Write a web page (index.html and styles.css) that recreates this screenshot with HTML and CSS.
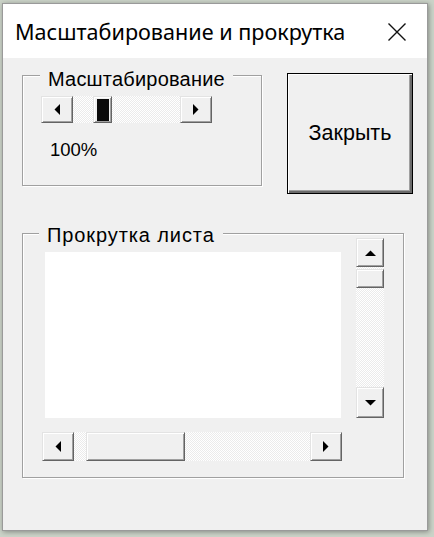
FILE: index.html
```html
<!DOCTYPE html>
<html lang="ru">
<head>
<meta charset="utf-8">
<title>Масштабирование и прокрутка</title>
<link rel="stylesheet" href="styles.css">
</head>
<body>
<div class="window">
  <div class="titlebar">
    <span class="title">Масштабирование и прокрутка</span>
    <svg class="close-x" width="20" height="20" viewBox="0 0 20 20"><path d="M1.5 1.5L18.5 18.5M18.5 1.5L1.5 18.5"/></svg>
  </div>
  <div class="client">
    <div class="top-row">
      <div class="frame frame-zoom">
        <span class="caption caption-zoom">Масштабирование</span>
        <div class="hscroll hscroll-zoom">
          <div class="sbtn sbtn-h"><svg width="6" height="11" viewBox="0 0 6 11"><polygon points="6,0 6,11 0.5,5.5"/></svg></div>
          <div class="track track-h">
            <div class="thumb thumb-focus" style="margin-left:20px"><span class="focus-fill"></span></div>
          </div>
          <div class="sbtn sbtn-h"><svg width="6" height="11" viewBox="0 0 6 11"><polygon points="0,0 0,11 5.5,5.5"/></svg></div>
        </div>
        <div class="percent">100%</div>
      </div>
      <button class="close-btn">Закрыть</button>
    </div>
    <div class="frame frame-scroll">
      <span class="caption caption-scroll">Прокрутка листа</span>
      <div class="scroll-row">
        <div class="listbox"></div>
        <div class="vscroll">
          <div class="sbtn sbtn-up"><svg width="11" height="6" viewBox="0 0 11 6"><polygon points="0,6 11,6 5.5,0.5"/></svg></div>
          <div class="track track-v">
            <div class="thumb thumb-v" style="margin-top:2px"></div>
          </div>
          <div class="sbtn sbtn-down"><svg width="11" height="6" viewBox="0 0 11 6"><polygon points="0,0 11,0 5.5,5.5"/></svg></div>
        </div>
      </div>
      <div class="hscroll hscroll-sheet">
        <div class="sbtn sbtn-h2"><svg width="6" height="11" viewBox="0 0 6 11"><polygon points="6,0 6,11 0.5,5.5"/></svg></div>
        <div class="track track-h">
          <div class="thumb thumb-wide" style="margin-left:12px"></div>
        </div>
        <div class="sbtn sbtn-h2"><svg width="6" height="11" viewBox="0 0 6 11"><polygon points="0,0 0,11 5.5,5.5"/></svg></div>
      </div>
    </div>
  </div>
</div>
</body>
</html>
```

FILE: styles.css
```css
* { box-sizing: border-box; }

html, body {
  margin: 0;
  padding: 0;
}

body {
  width: 434px;
  height: 537px;
  overflow: hidden;
  background: #cbd3c8;
  font-family: "Liberation Sans", Arial, sans-serif;
  color: #000;
}

.window {
  margin: 3px 0 0 2px;
  width: 426px;
  height: 528px;
  border: 1px solid #9a9a9a;
  background: #f0f0f0;
  display: flex;
  flex-direction: column;
  box-shadow: 1px 1px 5px rgba(0, 0, 0, 0.35);
}

.titlebar {
  height: 54px;
  flex: 0 0 54px;
  background: #fff;
  display: flex;
  align-items: center;
  padding: 0 20px 0 12px;
}

.title {
  flex: 1;
  font-family: "Noto Sans", "Open Sans", sans-serif;
  font-size: 21.6px;
  line-height: 28px;
  color: #000;
  margin-top: 1px;
}

.close-x {
  display: block;
  margin-top: 2px;
}

.close-x path {
  stroke: #111;
  stroke-width: 1.4;
  fill: none;
}

.client {
  flex: 1;
  padding: 15px 0 0 19px;
}

.top-row {
  display: flex;
  align-items: flex-start;
}

.frame {
  position: relative;
  border: 1px solid #a0a0a0;
  box-shadow: inset 1px 1px 0 #fff, 1px 1px 0 #fff;
}

.caption {
  position: absolute;
  background: #f0f0f0;
  padding: 0 8px;
  font-size: 20px;
  line-height: 24px;
  white-space: nowrap;
}

.caption-zoom {
  top: -9px;
  left: 17px;
  letter-spacing: 0.2px;
}

.caption-scroll {
  top: -11px;
  left: 16px;
  letter-spacing: 0.9px;
}

.frame-zoom {
  margin-top: 2px;
  width: 240px;
  height: 111px;
  padding: 20px 0 0 18px;
}

.hscroll {
  display: flex;
}

.hscroll-zoom {
  width: 171px;
  height: 27px;
}

.sbtn {
  flex: none;
  background: #f0f0f0;
  border-top: 1px solid #e3e3e3;
  border-left: 1px solid #e3e3e3;
  border-right: 1px solid #646464;
  border-bottom: 1px solid #646464;
  box-shadow: inset 1px 1px 0 #fff, inset -1px -1px 0 #a0a0a0;
  display: flex;
  align-items: center;
  justify-content: center;
}

.sbtn svg {
  display: block;
}

.sbtn svg polygon {
  fill: #000;
}

.sbtn-h {
  width: 32px;
  height: 100%;
}

.sbtn-h2 {
  width: 32px;
  height: 100%;
}

.track {
  flex: 1;
  display: flex;
  background: repeating-conic-gradient(#ffffff 0 25%, #ebebeb 0 50%) 0 0 / 2px 2px;
}

.track-v {
  flex-direction: column;
}

.thumb {
  flex: none;
  background: #f0f0f0;
  border-top: 1px solid #e3e3e3;
  border-left: 1px solid #e3e3e3;
  border-right: 1px solid #646464;
  border-bottom: 1px solid #646464;
  box-shadow: inset 1px 1px 0 #fff, inset -1px -1px 0 #a0a0a0;
}

.thumb-focus {
  width: 19px;
  height: 100%;
  padding: 2px 2px 1px 3px;
  display: flex;
}

.focus-fill {
  flex: 1;
  background: #0a0a0a;
}

.thumb-wide {
  width: 99px;
  height: 100%;
}

.thumb-v {
  width: 100%;
  height: 19px;
}

.percent {
  margin: 16px 0 0 9px;
  font-size: 18.5px;
  line-height: 22px;
}

.close-btn {
  margin: 0 0 0 25px;
  width: 126px;
  height: 121px;
  padding: 0;
  border: 1px solid #000;
  border-radius: 0;
  background: #f0f0f0;
  box-shadow: inset 1px 1px 0 #fff, inset -2px -2px 0 #6b6b6b, inset -3px -3px 0 #a0a0a0;
  font-family: "Liberation Sans", Arial, sans-serif;
  font-size: 21.5px;
  color: #000;
}

.frame-scroll {
  margin-top: 39px;
  width: 382px;
  height: 245px;
}

.scroll-row {
  display: flex;
  align-items: flex-start;
}

.listbox {
  margin: 18px 0 0 22px;
  width: 296px;
  height: 166px;
  background: #fff;
}

.vscroll {
  margin: 4px 0 0 15px;
  width: 28px;
  height: 180px;
  display: flex;
  flex-direction: column;
}

.sbtn-up {
  height: 29px;
  width: 100%;
}

.sbtn-down {
  height: 31px;
  width: 100%;
}

.hscroll-sheet {
  margin: 14px 0 0 19px;
  width: 300px;
  height: 29px;
}
```
